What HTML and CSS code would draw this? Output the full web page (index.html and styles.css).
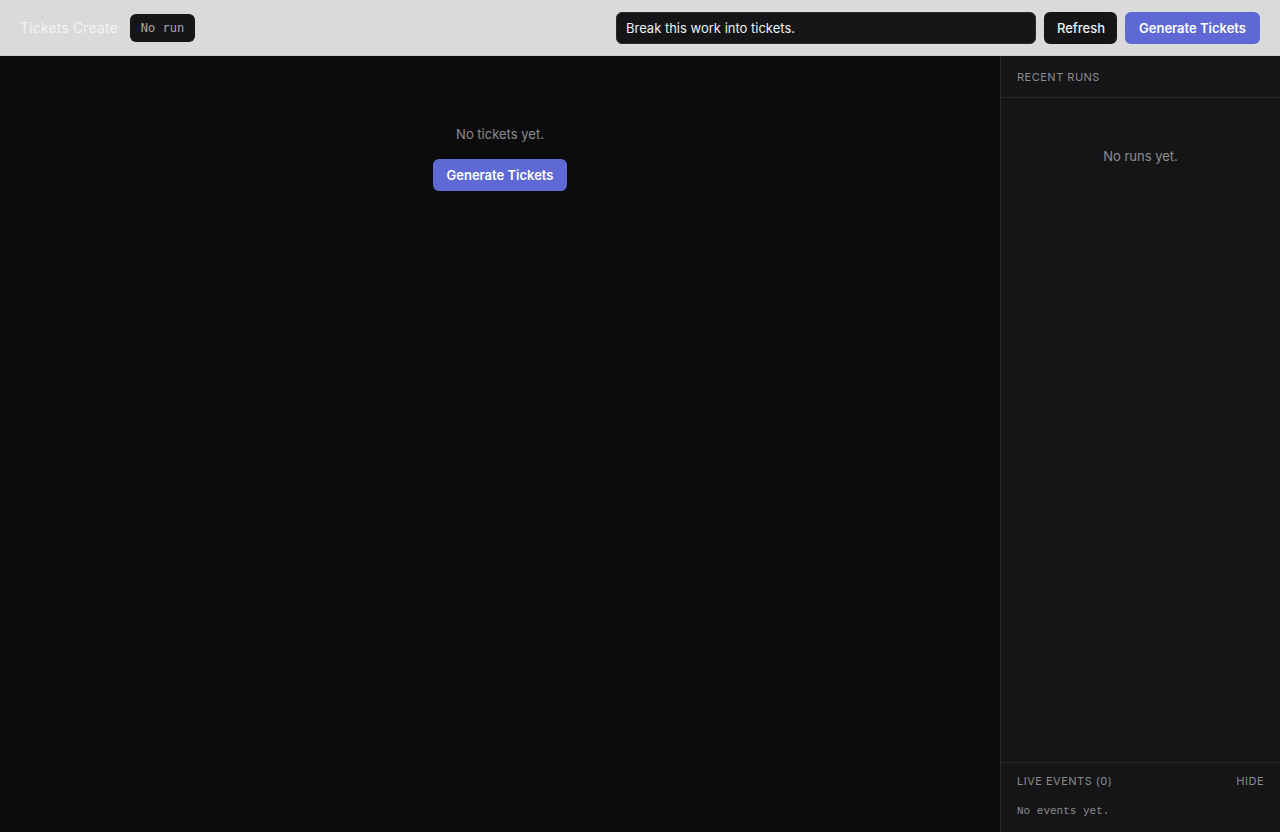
FILE: index.html
```html
<!DOCTYPE html>
<html lang="en">
<head>
    <meta charset="UTF-8">
    <meta name="viewport" content="width=device-width, initial-scale=1.0">
    <title>Tickets Create</title>
    <link rel="stylesheet" href="styles.css">
</head>
<body>
    <header class="topbar">
        <div class="topbar-left">
            <span class="page-title">Tickets Create</span>
            <span class="run-badge">No run</span>
        </div>
        <div class="topbar-right">
            <input class="prompt-input" type="text" value="Break this work into tickets.">
            <button class="btn btn-dark">Refresh</button>
            <button class="btn btn-primary">Generate Tickets</button>
        </div>
    </header>

    <div class="layout">
        <main class="main">
            <div class="empty">
                <p class="empty-text">No tickets yet.</p>
                <button class="btn btn-primary">Generate Tickets</button>
            </div>
        </main>

        <aside class="sidebar">
            <div class="panel-head">Recent runs</div>
            <div class="runs">
                <p class="runs-empty">No runs yet.</p>
            </div>
            <div class="events">
                <div class="events-head">
                    <span>Live events (0)</span>
                    <span class="hide-link">Hide</span>
                </div>
                <p class="events-empty">No events yet.</p>
            </div>
        </aside>
    </div>
</body>
</html>
```

FILE: styles.css
```css
*{
    margin: 0;
    padding: 0;
    box-sizing: border-box;
}

html, body{
    height: 100%;
}

body{
    font-family: Inter, "Noto Sans", sans-serif;
    background-color: #0c0c0e;
    color: #e6e6e6;
    display: flex;
    flex-direction: column;
    overflow: hidden;
}

/* top bar */
.topbar{
    height: 56px;
    flex-shrink: 0;
    background-color: #dadada;
    border-bottom: 1px solid #cfcfcf;
    display: flex;
    align-items: center;
    justify-content: space-between;
    padding: 0 20px;
}

.topbar-left{
    display: flex;
    align-items: center;
    gap: 12px;
}

.page-title{
    font-size: 14px;
    letter-spacing: 0.15px;
    color: #f3f3f3;
}

.run-badge{
    font-family: "DejaVu Sans Mono", monospace;
    font-size: 12px;
    color: #a9a9a9;
    background-color: #161618;
    border-radius: 6px;
    padding: 6px 11px;
    line-height: 16px;
}

.topbar-right{
    display: flex;
    align-items: center;
    gap: 8px;
}

.prompt-input{
    width: 420px;
    height: 32px;
    background-color: #151517;
    border: 1px solid #2a2a2d;
    border-radius: 6px;
    color: #f0f0f0;
    font-family: Inter, sans-serif;
    font-size: 13px;
    padding: 0 9px;
    outline: none;
}

.btn{
    height: 32px;
    padding: 0 14px;
    border: none;
    border-radius: 6px;
    font-family: Inter, sans-serif;
    font-size: 13px;
    cursor: pointer;
}

.btn-dark{
    padding: 0 12px 0 13px;
    background-color: #151517;
    color: #f0f0f0;
    font-weight: 500;
}

.btn-primary{
    background-color: #5e69d6;
    color: #fff;
    font-weight: 600;
}

.btn-primary:hover{
    background-color: #6a74de;
}

/* body */
.layout{
    flex: 1;
    display: flex;
    min-height: 0;
}

.main{
    flex: 1;
}

.empty{
    display: flex;
    flex-direction: column;
    align-items: center;
    padding-top: 69px;
    gap: 16px;
}

.empty-text{
    font-size: 13px;
    color: #8d8d8f;
    line-height: 18px;
}

/* right column */
.sidebar{
    width: 280px;
    background-color: #151517;
    border-left: 1px solid #27272a;
    display: flex;
    flex-direction: column;
}

.panel-head{
    height: 42px;
    display: flex;
    align-items: center;
    padding: 0 16px;
    border-bottom: 1px solid #27272a;
    font-size: 11px;
    letter-spacing: 0.5px;
    text-transform: uppercase;
    color: #8c8c8e;
}

.runs{
    flex: 1;
    padding-top: 50px;
    text-align: center;
}

.runs-empty{
    font-size: 13px;
    color: #8d8d8f;
}

.events{
    border-top: 1px solid #27272a;
    height: 70px;
    padding: 11px 16px 0;
}

.events-head{
    display: flex;
    justify-content: space-between;
    font-size: 11px;
    letter-spacing: 0.5px;
    text-transform: uppercase;
    color: #8c8c8e;
    line-height: 15px;
}

.hide-link{
    cursor: pointer;
}

.events-empty{
    margin-top: 16px;
    font-family: "Liberation Mono", monospace;
    font-size: 11px;
    color: #8c8c8e;
}
```
